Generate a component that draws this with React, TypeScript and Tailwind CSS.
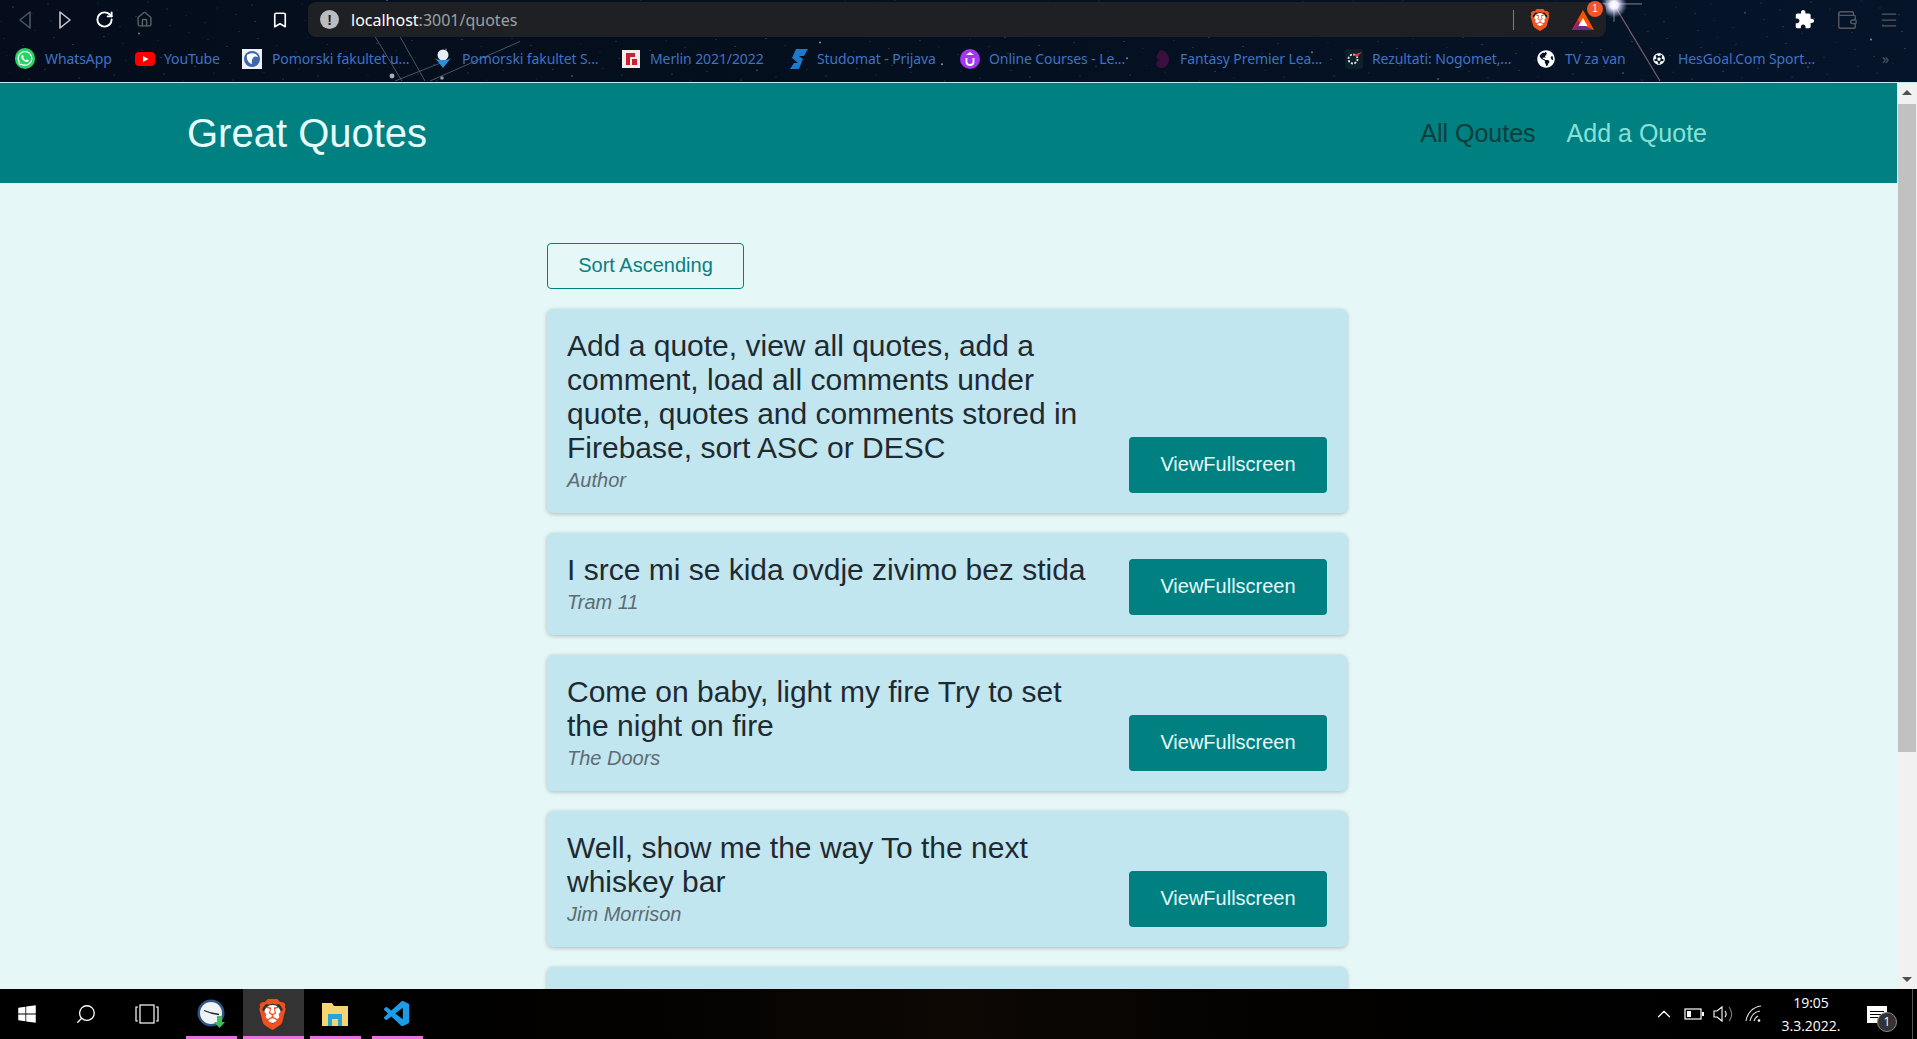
import React from 'react';
import { ChevronUp, Menu, Search, Wallet, RotateCw, Home, Bookmark } from 'lucide-react';
import { FaWhatsapp, FaWindows, FaGlobeAmericas, FaFutbol } from 'react-icons/fa';
import { SiBrave } from 'react-icons/si';
import { VscVscode } from 'react-icons/vsc';

// deterministic star field for the browser theme
const stars = Array.from({ length: 420 }, (_, i) => {
  const a = (i * 7919 + 13) % 1917;
  const b = (i * 104729 + 7) % 83;
  return { x: a, y: b, r: i % 17 === 0 ? 1 : 0.5, o: 0.2 + ((i * 31) % 50) / 100 };
});

const Wallpaper = () => (
  <svg className="absolute inset-0 h-full w-full" viewBox="0 0 1917 83" preserveAspectRatio="none">
    <defs>
      <radialGradient id="flare">
        <stop offset="0" stopColor="#ffffff" />
        <stop offset="0.3" stopColor="#f4f0ff" />
        <stop offset="1" stopColor="#b8c8ff" stopOpacity="0" />
      </radialGradient>
    </defs>
    {stars.map((s, i) => (
      <circle key={i} cx={s.x} cy={s.y} r={s.r} fill="#c8d4e6" opacity={s.o} />
    ))}
    <path d="M375 37 L402 82 M400 37 L425 82 M430 82 L520 42 M395 82 L440 64" stroke="#9fb2c8" strokeWidth="0.8" opacity="0.55" />
    <circle cx="392" cy="77" r="2.5" fill="#e8f2ff" opacity="0.7" />
    <circle cx="442" cy="79" r="1.8" fill="#e8f2ff" opacity="0.6" />
    <path d="M1616 8 L1660 82" stroke="#a07488" strokeWidth="1.2" opacity="0.75" />
    <path d="M1590 4 H1642 M1614 0 V22" stroke="#ffffff" strokeWidth="0.8" opacity="0.6" />
    <circle cx="1614" cy="5" r="13" fill="url(#flare)" />
  </svg>
);

const Triangle = ({ dir, className }: { dir: 'left' | 'right'; className: string }) => (
  <svg width="14" height="20" viewBox="0 0 14 20" className={className} fill="none" stroke="currentColor" strokeWidth="1.6">
    <path d={dir === 'left' ? 'M12 2 L2 10 L12 18 Z' : 'M2 2 L12 10 L2 18 Z'} strokeLinejoin="round" />
  </svg>
);

const BraveIcon = ({ className }: { className: string }) => (
  <span className="relative flex items-center justify-center">
    <span className="absolute h-[55%] w-[55%] rounded-full bg-white" />
    <SiBrave className={`relative ${className}`} />
  </span>
);

const YouTubeIcon = () => (
  <svg width="20" height="20" viewBox="0 0 20 20">
    <rect x="0" y="3" width="20" height="14" rx="4" fill="#f00" />
    <path d="M8 7 L13.5 10 L8 13 Z" fill="#fff" />
  </svg>
);

const PomorskiIcon = () => (
  <svg width="20" height="20" viewBox="0 0 20 20">
    <rect width="20" height="20" fill="#eef2f8" />
    <circle cx="10" cy="10" r="8" fill="#3f66a8" />
    <path d="M5 6 C9 3 15 4 16 8 C12 6 9 9 10 15 C7 14 4 11 5 6 Z" fill="#fff" />
  </svg>
);

const PomorskiSIcon = () => (
  <svg width="18" height="20" viewBox="0 0 18 20">
    <circle cx="9" cy="6" r="5.5" fill="#e6edf5" />
    <path d="M1 9 C5 12 13 12 17 9 L9 19 Z" fill="#2f8fd8" />
  </svg>
);

const MerlinIcon = () => (
  <svg width="18" height="20" viewBox="0 0 18 20">
    <rect y="1" width="18" height="18" fill="#f4ecec" />
    <path d="M4 4 H13 V8 H8 V16 H4 Z M10 10 H15 V16 H10 Z" fill="#c8232c" />
  </svg>
);

const StudomatIcon = () => (
  <svg width="18" height="22" viewBox="0 0 18 22">
    <path d="M6 1 H18 L14 8 H9 L13 11 L9 21 H0 L4 15 H8 L2 10 Z" fill="#1f78c8" />
  </svg>
);

const OnlineIcon = () => (
  <svg width="20" height="20" viewBox="0 0 20 20">
    <circle cx="10" cy="10" r="10" fill="#a435f0" />
    <path d="M6.5 9 V13 C6.5 17 13.5 17 13.5 13 V9" fill="none" stroke="#fff" strokeWidth="1.8" />
    <path d="M10 3 L14 6 H6 Z" fill="#fff" />
  </svg>
);

const PremierIcon = () => (
  <svg width="16" height="20" viewBox="0 0 16 20">
    <path d="M6 1 C11 1 15 5 15 10 C15 15 12 19 8 19 C5 19 2 17 2 14 L5 11 L2 8 Z" fill="#3a0f3e" />
  </svg>
);

const RezultatiIcon = () => (
  <svg width="18" height="20" viewBox="0 0 18 20">
    <rect width="18" height="20" rx="3" fill="#0d2128" />
    <circle cx="8" cy="10" r="4.5" fill="none" stroke="#e6edf0" strokeWidth="1.8" strokeDasharray="2 1.5" />
    <path d="M8 6 L17 3 L12 8 Z" fill="#e0324a" />
  </svg>
);

const BatIcon = () => (
  <svg width="24" height="24" viewBox="0 0 24 24">
    <path d="M12 2 L23 22 H1 Z" fill="#ff5000" />
    <path d="M1 22 L7 12 L12 22 Z" fill="#9e1f63" />
    <path d="M1 22 H23 L12 17 Z" fill="#662d91" />
    <path d="M12 10 L16.5 18 H7.5 Z" fill="#fff" />
  </svg>
);

const PuzzleIcon = () => (
  <svg width="21" height="21" viewBox="0 0 24 24" fill="#fff">
    <path d="M20.5 11H19V7c0-1.1-.9-2-2-2h-4V3.5C13 2.12 11.88 1 10.5 1S8 2.12 8 3.5V5H4c-1.1 0-1.99.9-1.99 2v3.8H3.5c1.49 0 2.7 1.21 2.7 2.7s-1.21 2.7-2.7 2.7H2V20c0 1.1.9 2 2 2h3.8v-1.5c0-1.49 1.21-2.7 2.7-2.7 1.49 0 2.7 1.21 2.7 2.7V22H17c1.1 0 2-.9 2-2v-4h1.5c1.38 0 2.5-1.12 2.5-2.5S21.88 11 20.5 11z" />
  </svg>
);

const bookmarks = [
  { label: 'WhatsApp', width: 'w-[120px]', gap: 'gap-[10px]', icon: <FaWhatsapp className="text-[21px] text-white bg-[#25d366] rounded-full p-[2px]" /> },
  { label: 'YouTube', width: 'w-[107px]', gap: 'gap-[9px]', icon: <YouTubeIcon /> },
  { label: 'Pomorski fakultet u...', width: 'w-[191px]', gap: 'gap-[10px]', icon: <PomorskiIcon /> },
  { label: 'Pomorski fakultet S...', width: 'w-[188px]', gap: 'gap-[9px]', icon: <PomorskiSIcon /> },
  { label: 'Merlin 2021/2022', width: 'w-[168px]', gap: 'gap-[9px]', icon: <MerlinIcon /> },
  { label: 'Studomat - Prijava', width: 'w-[171px]', gap: 'gap-[8px]', icon: <StudomatIcon /> },
  { label: 'Online Courses - Le...', width: 'w-[192px]', gap: 'gap-[9px]', icon: <OnlineIcon /> },
  { label: 'Fantasy Premier Lea...', width: 'w-[192px]', gap: 'gap-[8px]', icon: <PremierIcon /> },
  { label: 'Rezultati: Nogomet,...', width: 'w-[192px]', gap: 'gap-[8px]', icon: <RezultatiIcon /> },
  { label: 'TV za van', width: 'w-[113px]', gap: 'gap-[9px]', icon: <FaGlobeAmericas className="text-[18px] text-white" /> },
  { label: 'HesGoal.Com Sport...', width: 'w-[200px]', gap: 'gap-[9px]', icon: <FaFutbol className="text-[12px] text-white" /> },
];

const BrowserChrome = () => (
  <div className="relative h-[83px] shrink-0 overflow-hidden border-b border-[#c4ecec] bg-gradient-to-r from-[#050d1c] via-[#04101f] to-[#06142a]">
    <Wallpaper />
    <div className="relative flex h-[38px] items-start pl-[5px] pt-[2px]">
      <div className="flex h-[35px] w-[285px] items-center">
        <div className="flex w-[40px] justify-center"><Triangle dir="left" className="text-[#4b5563]" /></div>
        <div className="flex w-[40px] justify-center"><Triangle dir="right" className="text-[#c4c7cc]" /></div>
        <div className="flex w-[38px] justify-center"><RotateCw size={19} strokeWidth={2.4} className="text-white" /></div>
        <div className="flex w-[42px] justify-center"><Home size={17} className="text-[#5b6068]" /></div>
        <div className="ml-[105px] flex w-[20px] justify-center"><Bookmark size={18} strokeWidth={2.2} className="text-white" /></div>
      </div>
      <div className="ml-[18px] flex h-[35px] w-[1298px] items-center rounded-lg bg-[#1f2023] pl-[12px]">
        <span className="flex h-[19px] w-[19px] items-center justify-center rounded-full bg-[#b9bcc0] text-[14px] font-bold leading-none text-[#1f2023]">!</span>
        <span className="ml-[12px] font-['Noto_Sans',sans-serif] text-[16px] text-white">
          localhost<span className="text-[#9aa0a6]">:3001/quotes</span>
        </span>
        <span className="ml-auto h-[20px] w-px bg-[#7b7e83]" />
        <span className="ml-[15px]"><BraveIcon className="text-[22px] text-[#f1561f]" /></span>
        <span className="relative ml-[20px] mr-[11px] flex">
          <BatIcon />
          <span className="absolute -right-[8px] -top-[7px] flex h-[16px] w-[16px] items-center justify-center rounded-full bg-[#f0562b] font-['Liberation_Sans',sans-serif] text-[10px] text-white">1</span>
        </span>
      </div>
      <div className="ml-[188px] flex h-[35px] items-center gap-[21px]">
        <PuzzleIcon />
        <Wallet size={22} strokeWidth={1.5} className="text-[#55595f]" />
        <Menu size={20} strokeWidth={1.5} className="text-[#55595f]" />
      </div>
    </div>
    <div className="relative flex h-[44px] items-center pb-[3px] pl-[15px] font-['Noto_Sans',sans-serif] text-[14px] tracking-[-0.1px] text-[#3f72c4]">
      {bookmarks.map((b) => (
        <div key={b.label} className={`flex shrink-0 items-center ${b.width} ${b.gap}`}>
          <span className="flex w-[20px] justify-center">{b.icon}</span>
          <span className="whitespace-nowrap">{b.label}</span>
        </div>
      ))}
      <span className="ml-[33px] text-[#555b63]">»</span>
    </div>
  </div>
);

const quotes = [
  { id: 1, text: 'Add a quote, view all quotes, add a comment, load all comments under quote, quotes and comments stored in Firebase, sort ASC or DESC', author: 'Author' },
  { id: 2, text: 'I srce mi se kida ovdje zivimo bez stida', author: 'Tram 11' },
  { id: 3, text: 'Come on baby, light my fire Try to set the night on fire', author: 'The Doors' },
  { id: 4, text: 'Well, show me the way To the next whiskey bar', author: 'Jim Morrison' },
];

const QuoteCard = ({ text, author }: { text: string; author: string }) => (
  <li className="flex items-end justify-between rounded-[6px] bg-[#c1e6f0] p-5 shadow-[0_1px_4px_rgba(0,0,0,0.25)]">
    <div className="w-[530px]">
      <p className="text-[30px] leading-[34px] text-[#1f2a30]">{text}</p>
      <p className="pt-[2px] text-[20px] italic leading-[26px] text-[#5f6b70]">{author}</p>
    </div>
    <button className="h-[56px] w-[198px] rounded-[4px] bg-[#008080] pb-[2px] text-[20px] text-[#e6fcfc]">ViewFullscreen</button>
  </li>
);

const Scrollbar = () => (
  <div className="flex w-[20px] shrink-0 flex-col items-center bg-[#f1f1f1]">
    <span className="mt-[7px] h-0 w-0 border-x-[5px] border-b-[5px] border-x-transparent border-b-[#505050]" />
    <span className="mt-[9px] h-[648px] w-[18px] bg-[#c1c1c1]" />
    <span className="mt-auto mb-[7px] h-0 w-0 border-x-[5px] border-t-[5px] border-x-transparent border-t-[#505050]" />
  </div>
);

const Taskbar = () => (
  <div className="flex h-[50px] shrink-0 items-center bg-gradient-to-r from-black via-[#0d0804] to-black text-white">
    <div className="flex h-full w-[54px] items-center justify-center"><FaWindows className="text-[20px]" /></div>
    <div className="flex h-full w-[64px] items-center justify-center"><Search size={22} strokeWidth={1.4} className="-scale-x-100" /></div>
    <div className="flex h-full w-[57px] items-center justify-center">
      <svg width="24" height="20" viewBox="0 0 24 20" fill="none" stroke="#fff" strokeWidth="1.2">
        <rect x="5" y="1" width="14" height="18" />
        <path d="M3 3 H1 V17 H3 M21 3 H23 V17 H21" />
      </svg>
    </div>
    <div className="relative ml-[11px] flex h-full w-[51px] items-center justify-center">
      <svg width="30" height="30" viewBox="0 0 30 30">
        <circle cx="14" cy="14" r="13.5" fill="#2f5585" />
        <circle cx="14" cy="14" r="11" fill="#eef3f6" />
        <path d="M14 14 L7 11.5 M14 14 L22 15.5" stroke="#222" strokeWidth="1.3" />
        <path d="M20 17 H25 V23 H28 L22.5 29 L17 23 H20 Z" fill="#3fbf5a" />
      </svg>
      <span className="absolute bottom-0 h-[3px] w-full bg-[#ea6fe0]" />
    </div>
    <div className="relative ml-[6px] flex h-full w-[61px] items-center justify-center bg-[#333333]">
      <span className="-ml-[2px]"><BraveIcon className="text-[31px] text-[#f1501f]" /></span>
      <span className="absolute bottom-0 h-[3px] w-full bg-[#ea6fe0]" />
    </div>
    <div className="relative ml-[6px] flex h-full w-[51px] items-center justify-center">
      <svg width="28" height="26" viewBox="0 0 28 26" className="-ml-[2px]">
        <path d="M1 2 H11 L13 5 H27 V25 H1 Z" fill="#f6d56f" />
        <path d="M7 13 H21 V25 H17 V18 H11 V25 H7 Z" fill="#2aa3dd" />
      </svg>
      <span className="absolute bottom-0 h-[3px] w-full bg-[#ea6fe0]" />
    </div>
    <div className="relative ml-[11px] flex h-full w-[51px] items-center justify-center">
      <VscVscode className="text-[31px] text-[#1c9be6]" />
      <span className="absolute bottom-0 h-[3px] w-full bg-[#ea6fe0]" />
    </div>
    <div className="ml-auto flex h-full items-center">
      <ChevronUp size={22} strokeWidth={1.3} />
      <svg className="ml-[9px]" width="20" height="12" viewBox="0 0 20 12" fill="none" stroke="#fff" strokeWidth="1.2">
        <rect x="1" y="1" width="16" height="10" />
        <rect x="3" y="3" width="4" height="6" fill="#fff" stroke="none" />
        <rect x="18" y="4" width="2" height="4" fill="#fff" stroke="none" />
      </svg>
      <svg className="ml-[9px]" width="22" height="18" viewBox="0 0 22 18" fill="none" stroke="#fff" strokeWidth="1.1">
        <path d="M1 6 H4 L9 2 V16 L4 12 H1 Z" />
        <path d="M12 6 C13.5 8 13.5 10 12 12" />
        <path d="M16 2 C19.5 6 19.5 12 16 16" opacity="0.5" />
      </svg>
      <svg className="ml-[10px]" width="18" height="18" viewBox="0 0 18 18" fill="none" stroke="#ddd" strokeWidth="1.1">
        <path d="M1 16 C2 8 8 2 16 1 M5 16 C6 11 10 7 15 6 M9 16 C9.5 14 11 12 13 11" />
        <circle cx="14" cy="15.5" r="1.3" fill="#fff" stroke="none" />
      </svg>
      <div className="ml-[12px] flex w-[72px] flex-col items-center font-['Open_Sans',sans-serif] text-[14px] leading-[23px]">
        <span>19:05</span>
        <span>3.3.2022.</span>
      </div>
      <div className="relative ml-[20px] mr-[25px] flex h-[17px] w-[20px] flex-col justify-center gap-[2px] bg-white px-[3px]">
        <span className="h-px bg-black" />
        <span className="h-px bg-black" />
        <span className="h-px w-[8px] bg-black" />
        <span className="absolute -bottom-[9px] -right-[10px] flex h-[20px] w-[20px] items-center justify-center rounded-full border border-[#888] bg-[#333] font-['Open_Sans',sans-serif] text-[12px]">1</span>
      </div>
      <span className="h-full w-px bg-[#555]" />
      <span className="w-[4px]" />
    </div>
  </div>
);

export default function App() {
  return (
    <div className="flex h-screen w-screen flex-col overflow-hidden font-['Liberation_Sans',sans-serif]">
      <BrowserChrome />
      <div className="flex min-h-0 flex-1">
        <main className="min-w-0 flex-1 overflow-hidden bg-[#e6f7f7]">
          <header className="flex h-[100px] items-center justify-between bg-[#008080] pl-[187px] pr-[190px]">
            <div className="text-[40px] text-[#e6fcfc]">Great Quotes</div>
            <nav className="flex gap-[31px] pt-[2px] text-[25px]">
              <a className="text-[#0a3d3d]">All Qoutes</a>
              <a className="text-[#88e0d8]">Add a Quote</a>
            </nav>
          </header>
          <section className="ml-[547px] w-[800px] pt-[60px]">
            <button className="h-[46px] w-[197px] rounded-[4px] border border-[#008080] pb-[2px] text-[20px] text-[#0a7f7f]">Sort Ascending</button>
            <ul className="mt-[20px] flex flex-col gap-5">
              {quotes.map((q) => (
                <QuoteCard key={q.id} text={q.text} author={q.author} />
              ))}
              <li className="h-[102px] rounded-[6px] bg-[#c1e6f0] shadow-[0_1px_4px_rgba(0,0,0,0.25)]" />
            </ul>
          </section>
        </main>
        <Scrollbar />
      </div>
      <Taskbar />
    </div>
  );
}
